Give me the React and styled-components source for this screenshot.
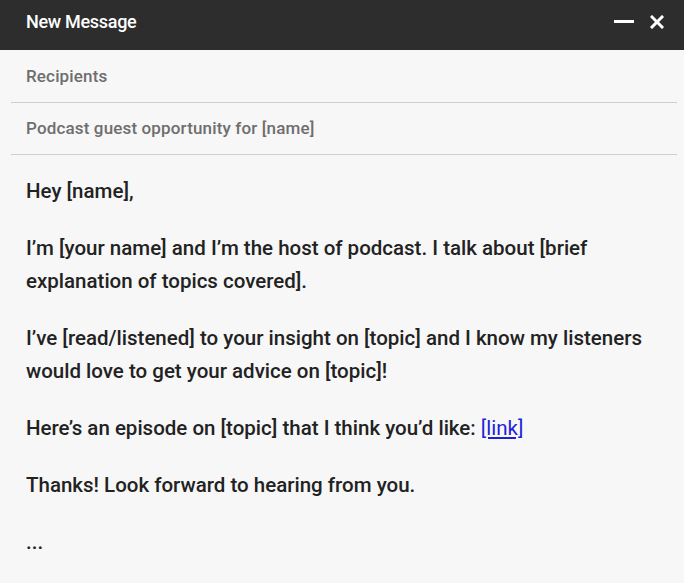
import React from "react";
import styled, { createGlobalStyle } from "styled-components";

const GlobalStyle = createGlobalStyle`
  html, body {
    margin: 0;
    padding: 0;
    background: #f7f7f7;
  }
  body {
    font-family: Roboto, "Liberation Sans", sans-serif;
  }
`;

const Window = styled.div`
  width: 684px;
  height: 583px;
  background: #f7f7f7;
  display: flex;
  flex-direction: column;
  overflow: hidden;
`;

const TitleBar = styled.header`
  display: flex;
  align-items: center;
  justify-content: space-between;
  height: 50px;
  box-sizing: border-box;
  padding: 0 20px 7px 26px;
  background: #2d2d2d;
  color: #ffffff;
  flex-shrink: 0;
`;

const Title = styled.h1`
  margin: 0;
  font-size: 18px;
  font-weight: 500;
  letter-spacing: -0.3px;
`;

const Controls = styled.div`
  display: flex;
  align-items: center;
  gap: 16px;
`;

const IconButton = styled.button`
  display: flex;
  align-items: center;
  justify-content: center;
  padding: 0;
  border: 0;
  background: none;
  color: #ffffff;
  cursor: pointer;
`;

const Field = styled.div`
  margin: 0 7px 0 11px;
  padding: 0 15px;
  height: 52px;
  display: flex;
  align-items: center;
  border-bottom: 1px solid #cfcfcf;
  font-size: 17px;
  font-weight: 500;
  color: #6e6e6e;
  letter-spacing: 0.15px;
`;

const Body = styled.div`
  padding: 20px 26px 0;
  color: #222222;
  font-size: 20.5px;
  font-weight: 500;
  line-height: 33px;
`;

const Paragraph = styled.p`
  margin: 0 0 24px;
`;

const Link = styled.a`
  color: #1f1fd6;
  font-weight: 400;
  text-decoration: underline;
`;

function MinimizeIcon() {
  return (
    <svg width="20" height="20" viewBox="0 0 20 20">
      <rect x="0" y="8" width="20" height="3" fill="currentColor" />
    </svg>
  );
}

function CloseIcon() {
  return (
    <svg width="14" height="14" viewBox="0 0 14 14">
      <path
        d="M2 2 L12 12 M12 2 L2 12"
        stroke="currentColor"
        strokeWidth="3"
        strokeLinecap="square"
      />
    </svg>
  );
}

export default function App() {
  return (
    <Window>
      <GlobalStyle />
      <TitleBar>
        <Title>New Message</Title>
        <Controls>
          <IconButton aria-label="Minimize">
            <MinimizeIcon />
          </IconButton>
          <IconButton aria-label="Close">
            <CloseIcon />
          </IconButton>
        </Controls>
      </TitleBar>
      <Field>Recipients</Field>
      <Field>Podcast guest opportunity for [name]</Field>
      <Body>
        <Paragraph>Hey [name],</Paragraph>
        <Paragraph>
          I’m [your name] and I’m the host of podcast. I talk about [brief
          explanation of topics covered].
        </Paragraph>
        <Paragraph>
          I’ve [read/listened] to your insight on [topic] and I know my
          listeners would love to get your advice on [topic]!
        </Paragraph>
        <Paragraph>
          Here’s an episode on [topic] that I think you’d like:{" "}
          <Link href="#">[link]</Link>
        </Paragraph>
        <Paragraph>Thanks! Look forward to hearing from you.</Paragraph>
        <Paragraph>...</Paragraph>
      </Body>
    </Window>
  );
}
